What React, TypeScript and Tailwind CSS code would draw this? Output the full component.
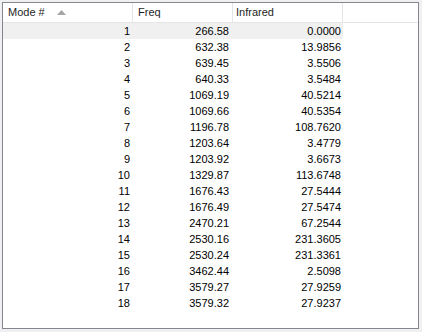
const rows: Array<[number, string, string]> = [
  [1, "266.58", "0.0000"],
  [2, "632.38", "13.9856"],
  [3, "639.45", "3.5506"],
  [4, "640.33", "3.5484"],
  [5, "1069.19", "40.5214"],
  [6, "1069.66", "40.5354"],
  [7, "1196.78", "108.7620"],
  [8, "1203.64", "3.4779"],
  [9, "1203.92", "3.6673"],
  [10, "1329.87", "113.6748"],
  [11, "1676.43", "27.5444"],
  [12, "1676.49", "27.5474"],
  [13, "2470.21", "67.2544"],
  [14, "2530.16", "231.3605"],
  [15, "2530.24", "231.3361"],
  [16, "3462.44", "2.5098"],
  [17, "3579.27", "27.9259"],
  [18, "3579.32", "27.9237"],
];

export default function App() {
  return (
    <div className="w-[422px] h-[332px] bg-[#f0f0f0] pl-[2px] pt-[2px] font-['Liberation_Sans',Arial,sans-serif] text-[11px] text-black">
      <div className="w-[417px] h-[327px] border border-[#828790] bg-white flex flex-col">
        {/* column header */}
        <div className="flex h-[20px] border-b border-[#e5e5e5] shrink-0">
          <div className="w-[130px] border-r border-[#e5e5e5] flex items-center pl-[5px] text-[#1e1e1e]">
            <span>Mode #</span>
            <svg className="ml-[12px]" width="9" height="5" viewBox="0 0 9 5">
              <polygon points="4.5,0 9,5 0,5" fill="#a5a5a5" />
            </svg>
          </div>
          <div className="w-[100px] border-r border-[#e5e5e5] flex items-center pl-[5px] text-[#1e1e1e]">
            Freq
          </div>
          <div className="w-[110px] border-r border-[#e5e5e5] flex items-center pl-[3px] text-[#1e1e1e]">
            Infrared
          </div>
          <div className="flex-1" />
        </div>

        {/* rows */}
        <div className="flex flex-col">
          {rows.map(([n, freq, ir]) => (
            <div
              key={n}
              className={
                n === 1
                  ? "flex h-[16px] w-[340px] bg-[#f0f0f0] items-center pt-[1px]"
                  : "flex h-[16px] w-[340px] items-center pt-[1px]"
              }
            >
              <div className="w-[130px] text-right pr-[3px]">{n}</div>
              <div className="w-[100px] text-right pr-[4px]">{freq}</div>
              <div className="w-[110px] text-right pr-[2px]">{ir}</div>
            </div>
          ))}
        </div>
      </div>
    </div>
  );
}
